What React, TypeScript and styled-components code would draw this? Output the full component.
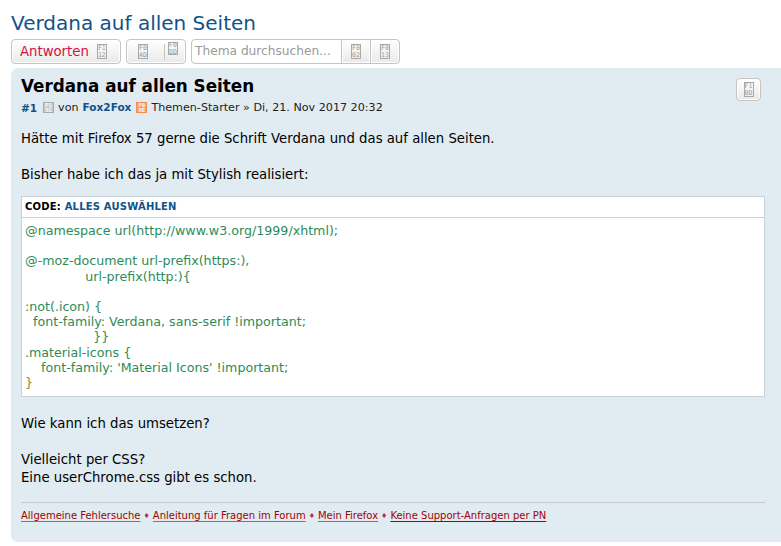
import React from "react";
import styled, { createGlobalStyle } from "styled-components";

const GlobalStyle = createGlobalStyle`
  html, body {
    margin: 0;
    padding: 0;
    background: #fff;
    overflow: hidden;
  }
  body {
    font-family: "DejaVu Sans", Verdana, sans-serif;
    color: #000;
  }
`;

const Page = styled.div`
  width: 781px;
  height: 546px;
  overflow: hidden;
  padding: 11px 0 0 11px;
  box-sizing: border-box;
`;

const TopicTitle = styled.h2`
  margin: 0 0 4px;
  font-size: 20px;
  line-height: 24px;
  font-weight: 400;
  color: #105289;
`;

const ActionBar = styled.div`
  display: flex;
  gap: 5px;
  height: 25px;
  margin-bottom: 4px;
`;

const Button = styled.div<{ $width: number }>`
  display: flex;
  align-items: center;
  justify-content: center;
  box-sizing: border-box;
  width: ${(p) => p.$width}px;
  height: 25px;
  border: 1px solid #c7c3bf;
  border-radius: 4px;
  background: linear-gradient(#ffffff, #e9e9e9);
  box-shadow: inset 0 0 0 1px #fff;
`;

const ReplyButton = styled(Button)`
  justify-content: flex-start;
  gap: 8px;
  padding-left: 8px;
`;

const ToolsButton = styled(Button)`
  justify-content: flex-start;
  padding-left: 11px;
`;

const ReplyLabel = styled.span`
  font-size: 13.25px;
  color: #d31141;
`;

const Divider = styled.span`
  width: 1px;
  height: 16px;
  margin: 0 3px 0 16px;
  background: #c7c3bf;
`;

const SearchBox = styled.div`
  display: flex;
  height: 25px;
`;

const SearchInput = styled.div`
  box-sizing: border-box;
  width: 151px;
  height: 25px;
  padding: 0 0 0 3px;
  border: 1px solid #c7c3bf;
  border-radius: 4px 0 0 4px;
  background: #fff;
  font-size: 12.2px;
  line-height: 23px;
  color: #9a9a9a;
  white-space: nowrap;
  overflow: hidden;
`;

const SearchButton = styled(Button)<{ $last?: boolean }>`
  margin-left: -1px;
  border-radius: ${(p) => (p.$last ? "0 4px 4px 0" : "0")};
`;

const Post = styled.div`
  position: relative;
  box-sizing: border-box;
  width: 770px;
  height: 474px;
  padding: 7px 16px 0 10px;
  border-radius: 7px 0 0 7px;
  background: #e1ebf2;
`;

const PostTitle = styled.h3`
  margin: 0;
  font-size: 16.8px;
  line-height: 22px;
  font-weight: 700;
`;

const PostMeta = styled.div`
  display: flex;
  align-items: center;
  height: 15px;
  margin-top: 3px;
  font-size: 11.15px;
  color: #222;
`;

const Author = styled.strong`
  font-size: 10.5px;
  color: #105289;
`;

const MetaText = styled.span`
  margin-left: 4px;
`;

const Message = styled.div`
  margin-top: 15px;
  font-size: 13.25px;
  line-height: 18px;
`;

const Paragraph = styled.p<{ $gap?: number }>`
  margin: 0 0 ${(p) => p.$gap ?? 18}px;
`;

const CodeBox = styled.div`
  margin-bottom: 18px;
  border: 1px solid #c9d2d8;
  background: #fff;
`;

const CodeHeader = styled.div`
  height: 20px;
  padding-left: 3px;
  border-bottom: 1px solid #c9d2d8;
  font-size: 10px;
  line-height: 20px;
  font-weight: 700;
  letter-spacing: 0.2px;
`;

const SelectAll = styled.span`
  color: #105289;
`;

const CodeBody = styled.pre`
  margin: 0;
  box-sizing: border-box;
  height: 178px;
  padding: 5px 0 0 3px;
  font-family: inherit;
  font-size: 12.65px;
  line-height: 15.2px;
  color: #2e8b57;
`;

const Brace = styled.span`
  color: #8b8b2e;
`;

const QuickEdit = styled(Button)`
  position: absolute;
  top: 10px;
  right: 20px;
  height: 23px;
`;

const Rule = styled.hr`
  height: 1px;
  margin: 15px 0 6px;
  border: 0;
  background: #c9c9c9;
`;

const Links = styled.div`
  display: flex;
  align-items: center;
  gap: 3px;
  font-size: 10px;
  line-height: 14px;
`;

const FooterLink = styled.a<{ $line: string }>`
  color: #a50000;
  text-decoration: underline;
  text-decoration-color: ${(p) => p.$line};
  text-underline-offset: 2px;
`;

const Bullet = styled.span`
  color: #bc2a4d;
  font-size: 7px;
`;

// the missing-glyph boxes the browser drew for the icon font
const TofuBox = styled.span`
  display: inline-flex;
  flex: none;
  flex-direction: column;
  align-items: center;
  justify-content: center;
  box-sizing: border-box;
  width: 10px;
  height: 15px;
  border: 1px solid #a9a9a9;
  color: #999;
  font-family: "DejaVu Sans Mono", monospace;
  font-size: 6.5px;
  line-height: 6.5px;
`;

const Raised = styled(TofuBox)`
  height: 13px;
  margin-top: -6px;
`;

const MetaIcon = styled(TofuBox)<{ $tone: string; $fill: string }>`
  width: 11px;
  height: 11px;
  margin-left: ${(p) => (p.$tone === "#f58b4c" ? 5 : 6)}px;
  border-color: ${(p) => p.$tone};
  background: ${(p) => p.$fill};
  color: #f4f8fa;
  font-size: 5.5px;
  line-height: 4.5px;
  font-weight: 700;
`;

const Tofu: React.FC<{ code: string }> = ({ code }) => (
  <TofuBox>
    <span>{code.slice(0, 2)}</span>
    <span>{code.slice(2)}</span>
  </TofuBox>
);

const code = `@namespace url(http://www.w3.org/1999/xhtml);

@-moz-document url-prefix(https:),
               url-prefix(http:){

:not(.icon) {
  font-family: Verdana, sans-serif !important;
                 }}
.material-icons {
    font-family: 'Material Icons' !important;
`;

export default function App() {
  return (
    <>
      <GlobalStyle />
      <Page>
        <TopicTitle>Verdana auf allen Seiten</TopicTitle>
        <ActionBar>
          <ReplyButton $width={110}>
            <ReplyLabel>Antworten</ReplyLabel>
            <Tofu code="F112" />
          </ReplyButton>
          <ToolsButton $width={60}>
            <Tofu code="F0AD" />
            <Divider />
            <Raised>
              <span>F0</span>
              <span>DD</span>
            </Raised>
          </ToolsButton>
          <SearchBox>
            <SearchInput>Thema durchsuchen...</SearchInput>
            <SearchButton $width={30}>
              <Tofu code="F002" />
            </SearchButton>
            <SearchButton $width={30} $last>
              <Tofu code="F013" />
            </SearchButton>
          </SearchBox>
        </ActionBar>
        <Post>
          <QuickEdit $width={25}>
            <Tofu code="F10D" />
          </QuickEdit>
          <PostTitle>Verdana auf allen Seiten</PostTitle>
          <PostMeta>
            <Author>#1</Author>
            <MetaIcon $tone="#a9a9a9" $fill="#c6cdd1">
              <span>F1</span>
              <span>5C</span>
            </MetaIcon>
            <MetaText>von</MetaText>
            <MetaText>
              <Author>Fox2Fox</Author>
            </MetaText>
            <MetaIcon $tone="#f58b4c" $fill="#f7a06c">
              <span>F0</span>
              <span>9E</span>
            </MetaIcon>
            <MetaText>Themen-Starter » Di, 21. Nov 2017 20:32</MetaText>
          </PostMeta>
          <Message>
            <Paragraph>Hätte mit Firefox 57 gerne die Schrift Verdana und das auf allen Seiten.</Paragraph>
            <Paragraph $gap={12}>Bisher habe ich das ja mit Stylish realisiert:</Paragraph>
            <CodeBox>
              <CodeHeader>
                CODE: <SelectAll>ALLES AUSWÄHLEN</SelectAll>
              </CodeHeader>
              <CodeBody>
                {code}
                <Brace>{"}"}</Brace>
              </CodeBody>
            </CodeBox>
            <Paragraph>Wie kann ich das umsetzen?</Paragraph>
            <Paragraph as="div" $gap={0}>
              Vielleicht per CSS?
              <br />
              Eine userChrome.css gibt es schon.
            </Paragraph>
          </Message>
          <Rule />
          <Links>
            <FooterLink $line="#368ad2">Allgemeine Fehlersuche</FooterLink>
            <Bullet>♦</Bullet>
            <FooterLink $line="#368ad2">Anleitung für Fragen im Forum</FooterLink>
            <Bullet>♦</Bullet>
            <FooterLink $line="#368ad2">Mein Firefox</FooterLink>
            <Bullet>♦</Bullet>
            <FooterLink $line="#a50000">Keine Support-Anfragen per PN</FooterLink>
          </Links>
        </Post>
      </Page>
    </>
  );
}
